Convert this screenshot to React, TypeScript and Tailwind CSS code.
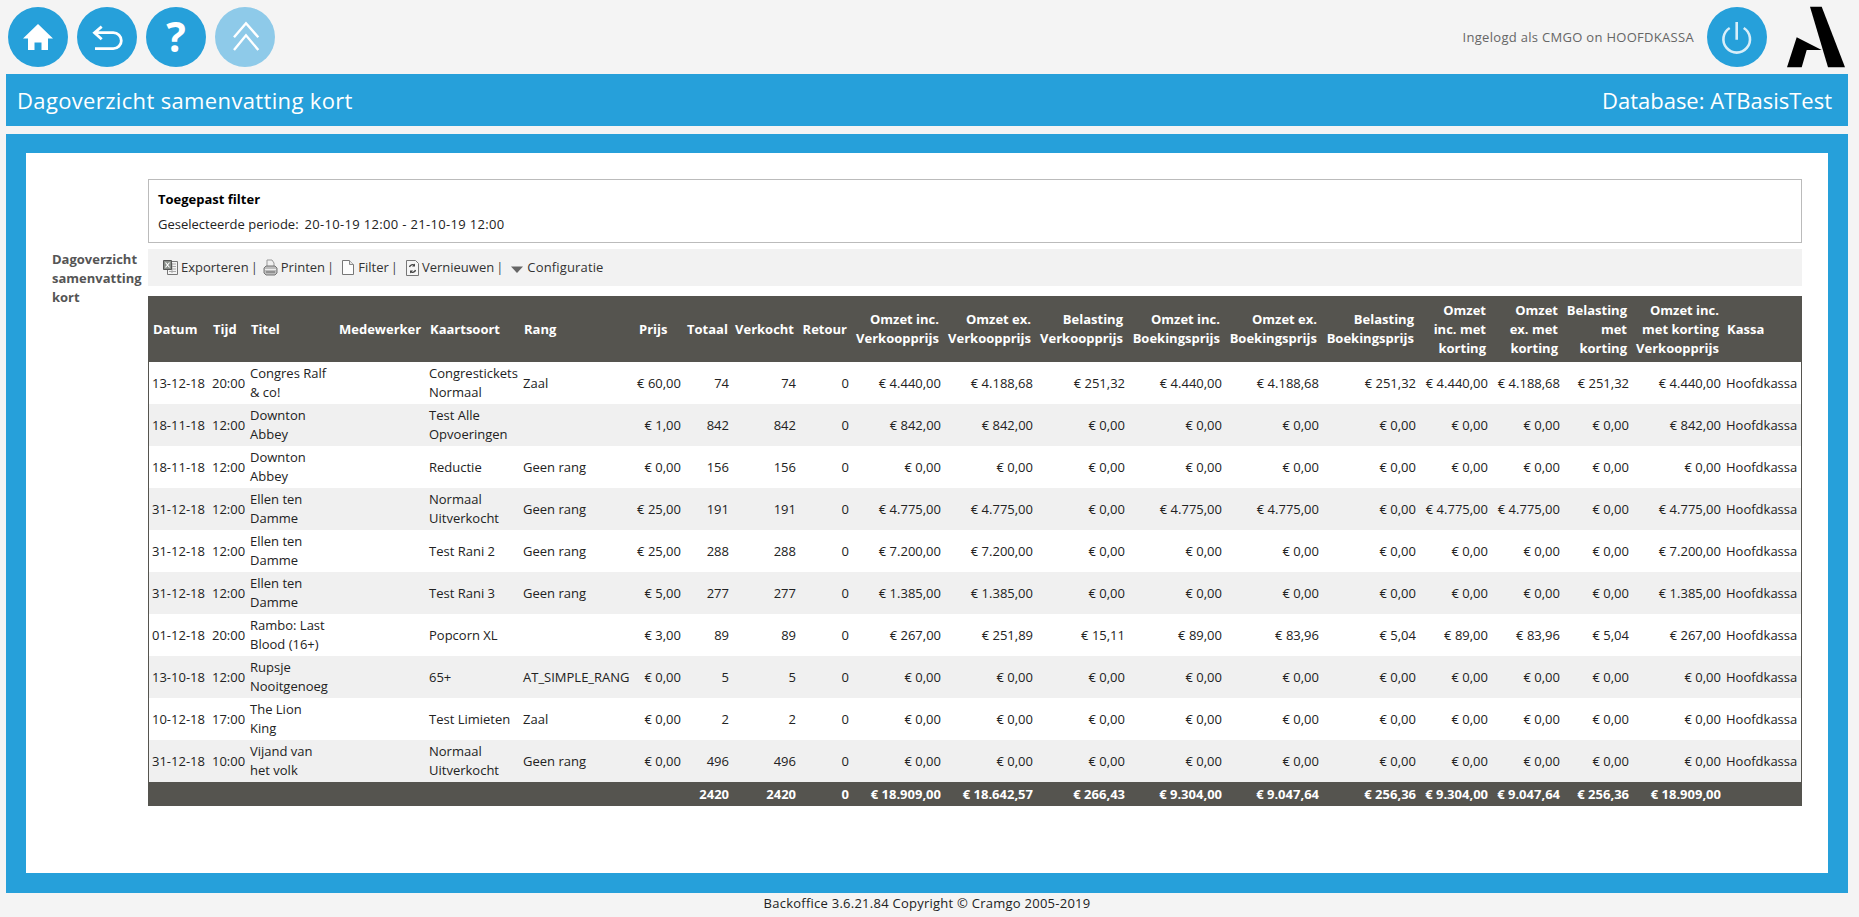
const colWidths = [
  "w-[60px]", "w-[38px]", "w-[88px]", "w-[91px]", "w-[94px]", "w-[115px]", "w-[48px]",
  "w-[48px]", "w-[67px]", "w-[53px]", "w-[92px]", "w-[92px]", "w-[92px]", "w-[97px]",
  "w-[97px]", "w-[97px]", "w-[72px]", "w-[72px]", "w-[69px]", "w-[92px]", "w-[78px]",
];

const headers = [
  "Datum", "Tijd", "Titel", "Medewerker", "Kaartsoort", "Rang", "Prijs",
  "Totaal", "Verkocht", "Retour",
  "Omzet inc.\nVerkoopprijs", "Omzet ex.\nVerkoopprijs", "Belasting\nVerkoopprijs",
  "Omzet inc.\nBoekingsprijs", "Omzet ex.\nBoekingsprijs", "Belasting\nBoekingsprijs",
  "Omzet\ninc. met\nkorting", "Omzet\nex. met\nkorting", "Belasting\nmet\nkorting",
  "Omzet inc.\nmet korting\nVerkoopprijs", "Kassa",
];

const zeros = ["€ 0,00", "€ 0,00", "€ 0,00", "€ 0,00", "€ 0,00", "€ 0,00", "€ 0,00", "€ 0,00", "€ 0,00", "€ 0,00"];

const rows: string[][] = [
  ["13-12-18", "20:00", "Congres Ralf\n& co!", "", "Congrestickets\nNormaal", "Zaal", "€ 60,00", "74", "74", "0",
    "€ 4.440,00", "€ 4.188,68", "€ 251,32", "€ 4.440,00", "€ 4.188,68", "€ 251,32", "€ 4.440,00", "€ 4.188,68", "€ 251,32", "€ 4.440,00", "Hoofdkassa"],
  ["18-11-18", "12:00", "Downton\nAbbey", "", "Test Alle\nOpvoeringen", "", "€ 1,00", "842", "842", "0",
    "€ 842,00", "€ 842,00", "€ 0,00", "€ 0,00", "€ 0,00", "€ 0,00", "€ 0,00", "€ 0,00", "€ 0,00", "€ 842,00", "Hoofdkassa"],
  ["18-11-18", "12:00", "Downton\nAbbey", "", "Reductie", "Geen rang", "€ 0,00", "156", "156", "0", ...zeros, "Hoofdkassa"],
  ["31-12-18", "12:00", "Ellen ten\nDamme", "", "Normaal\nUitverkocht", "Geen rang", "€ 25,00", "191", "191", "0",
    "€ 4.775,00", "€ 4.775,00", "€ 0,00", "€ 4.775,00", "€ 4.775,00", "€ 0,00", "€ 4.775,00", "€ 4.775,00", "€ 0,00", "€ 4.775,00", "Hoofdkassa"],
  ["31-12-18", "12:00", "Ellen ten\nDamme", "", "Test Rani 2", "Geen rang", "€ 25,00", "288", "288", "0",
    "€ 7.200,00", "€ 7.200,00", "€ 0,00", "€ 0,00", "€ 0,00", "€ 0,00", "€ 0,00", "€ 0,00", "€ 0,00", "€ 7.200,00", "Hoofdkassa"],
  ["31-12-18", "12:00", "Ellen ten\nDamme", "", "Test Rani 3", "Geen rang", "€ 5,00", "277", "277", "0",
    "€ 1.385,00", "€ 1.385,00", "€ 0,00", "€ 0,00", "€ 0,00", "€ 0,00", "€ 0,00", "€ 0,00", "€ 0,00", "€ 1.385,00", "Hoofdkassa"],
  ["01-12-18", "20:00", "Rambo: Last\nBlood (16+)", "", "Popcorn XL", "", "€ 3,00", "89", "89", "0",
    "€ 267,00", "€ 251,89", "€ 15,11", "€ 89,00", "€ 83,96", "€ 5,04", "€ 89,00", "€ 83,96", "€ 5,04", "€ 267,00", "Hoofdkassa"],
  ["13-10-18", "12:00", "Rupsje\nNooitgenoeg", "", "65+", "AT_SIMPLE_RANG", "€ 0,00", "5", "5", "0", ...zeros, "Hoofdkassa"],
  ["10-12-18", "17:00", "The Lion\nKing", "", "Test Limieten", "Zaal", "€ 0,00", "2", "2", "0", ...zeros, "Hoofdkassa"],
  ["31-12-18", "10:00", "Vijand van\nhet volk", "", "Normaal\nUitverkocht", "Geen rang", "€ 0,00", "496", "496", "0", ...zeros, "Hoofdkassa"],
];

const totals = ["", "", "", "", "", "", "", "2420", "2420", "0",
  "€ 18.909,00", "€ 18.642,57", "€ 266,43", "€ 9.304,00", "€ 9.047,64", "€ 256,36", "€ 9.304,00", "€ 9.047,64", "€ 256,36", "€ 18.909,00", ""];

// columns 0-6 and the last one are left aligned in the header, Prijs too
const isLeftHeader = (i: number) => i <= 6 || i === 20;
const isLeftCell = (i: number) => i <= 5 || i === 20;

function RoundButton({ children, light }: { children: React.ReactNode; light?: boolean }) {
  return (
    <div className={`w-[60px] h-[60px] rounded-full flex items-center justify-center shrink-0 ${light ? "bg-[#8ecae9]" : "bg-[#26a0da]"}`}>
      {children}
    </div>
  );
}

function ExportIcon() {
  return (
    <svg width="16" height="17" viewBox="0 0 16 17">
      <path d="M4.5 2.5h10v13h-10z" fill="#f4f4f4" stroke="#777" />
      <path d="M6 5h7M6 7.5h7M6 10h7M6 12.5h7M9 4v10" stroke="#aaa" />
      <path d="M.5 1.5h8v9h-8z" fill="#8a8f8a" stroke="#555" />
      <path d="M2.5 3.5l4 5M6.5 3.5l-4 5" stroke="#fff" strokeWidth="1.2" />
    </svg>
  );
}

function PrintIcon() {
  return (
    <svg width="15" height="17" viewBox="0 0 15 17">
      <path d="M4 1h5l2 3v4H4z" fill="#f0f0f0" stroke="#999" />
      <path d="M1 9l2-2h9l2 2v5l-2 2H3l-2-2z" fill="#bdbdbd" stroke="#777" />
      <path d="M2 10.500h11" stroke="#eee" />
      <path d="M3 13h9" stroke="#666" />
    </svg>
  );
}

function PageIcon() {
  return (
    <svg width="12" height="15" viewBox="0 0 12 15">
      <path d="M.5.500h7l4 4v10H.5z" fill="#fdfdfd" stroke="#777" />
      <path d="M7.500.500v4h4" fill="#e4e4e4" stroke="#888" />
    </svg>
  );
}

function RefreshIcon() {
  return (
    <svg width="13" height="17" viewBox="0 0 13 17">
      <path d="M.5 1.500h9l3 3v12H.5z" fill="#f6f6f6" stroke="#777" />
      <path d="M3.500 8a3 3 0 0 1 5-1.500M9.500 11a3 3 0 0 1-5 1.500" fill="none" stroke="#444" strokeWidth="1.3" />
      <path d="M9 4.500v3H6zM4 14.500v-3h3z" fill="#444" />
    </svg>
  );
}

function Sep({ className }: { className: string }) {
  return <span className={`ml-[2px] text-[#444] ${className}`}>|</span>;
}

export default function App() {
  return (
    <div className="w-[1859px] h-[917px] bg-[#f4f4f4] overflow-hidden font-['Open_Sans',sans-serif] text-[13px] leading-[19px] text-[#222]">
      {/* top bar */}
      <div className="h-[74px] flex items-center justify-between pl-[8px] pr-[14px]">
        <div className="flex gap-[9px] -mt-[1px]">
          <RoundButton>
            <svg width="60" height="60" viewBox="0 0 60 60">
              <path d="M30 17L15 31.500h5V43h6.500v-7.500h7V43H40V31.500h5z" fill="#fff" />
            </svg>
          </RoundButton>
          <RoundButton>
            <svg width="60" height="60" viewBox="0 0 60 60" fill="none" stroke="#fff" strokeWidth="2.8">
              <path d="M24.700 19.700L17.500 25.700l7.200 6.600M17.500 25.700h18.800a8 8 0 0 1 0 16H18" />
            </svg>
          </RoundButton>
          <RoundButton>
            <span className="font-bold text-[41px] leading-none text-white">?</span>
          </RoundButton>
          <RoundButton light>
            <svg width="60" height="60" viewBox="0 0 60 60" fill="none" stroke="#fff" strokeWidth="2.4">
              <path d="M19 30.300L31 16.300l12.300 14M19 43l12-14.700L43.300 43" />
            </svg>
          </RoundButton>
        </div>
        <div className="flex items-center">
          <span className="text-[#666] mr-[13px] tracking-[0.3px]">Ingelogd als CMGO on HOOFDKASSA</span>
          <RoundButton>
            <svg width="60" height="60" viewBox="0 0 60 60" fill="none" stroke="#d8eef9" strokeWidth="2.600">
              <path d="M22.700 21A13.300 13.300 0 1 0 36.700 21M29.700 15v17.700" />
            </svg>
          </RoundButton>
          <svg width="58" height="62" viewBox="0 0 58 62" className="ml-[20px]" fill="#000">
            <path d="M23 .7h11.700L58 61.300H41z" />
            <path d="M9.700 31.300L34.700 44h-15l-5 17.300H0z" />
          </svg>
        </div>
      </div>

      <div className="ml-[6px] mr-[11px]">
        {/* title bar */}
        <div className="h-[52px] bg-[#26a0da] text-white flex items-center justify-between pl-[11px] pr-[16px] text-[22px]">
          <span className="tracking-[0.35px]">Dagoverzicht samenvatting kort</span>
          <span>Database: ATBasisTest</span>
        </div>

        {/* main panel */}
        <div className="mt-[8px] h-[759px] bg-[#26a0da] pt-[19px] px-[20px] pb-[20px]">
          <div className="h-full bg-white pt-[26px] flex">
            <div className="w-[122px] pt-[71px] pl-[26px] font-bold text-[#555] shrink-0">
              Dagoverzicht samenvatting kort
            </div>
            <div className="w-[1654px]">
              <div className="h-[64px] border border-[#bbb] pl-[9px] pt-[10px]">
                <div className="font-bold text-black">Toegepast filter</div>
                <div className="mt-[6px] flex">
                  <span>Geselecteerde periode:</span>
                  <span className="ml-[6px] tracking-[0.32px]">20-10-19 12:00 - 21-10-19 12:00</span>
                </div>
              </div>

              <div className="mt-[6px] h-[37px] bg-[#f2f2f2] flex items-center pl-[15px] text-[#333]">
                <ExportIcon />
                <span className="ml-[2px]">Exporteren</span>
                <Sep className="mr-[5px]" />
                <PrintIcon />
                <span className="ml-[3px]">Printen</span>
                <Sep className="mr-[8px]" />
                <PageIcon />
                <span className="ml-[4px]">Filter</span>
                <Sep className="mr-[8px]" />
                <RefreshIcon />
                <span className="ml-[3px]">Vernieuwen</span>
                <Sep className="mr-[7px]" />
                <svg width="12" height="7" viewBox="0 0 12 7" className="ml-[1px] mt-[3px]">
                  <path d="M0 .5h12L6 7z" fill="#666" />
                </svg>
                <span className="ml-[4px] tracking-[0.15px]">Configuratie</span>
              </div>

              <div className="mt-[10px] border-x border-[#55544f]">
                <table className="table-fixed w-[1652px] border-collapse">
                  <colgroup>
                    {colWidths.map((c, i) => (
                      <col key={i} className={c} />
                    ))}
                  </colgroup>
                  <thead>
                    <tr className="h-[66px] bg-[#55544f] text-white">
                      {headers.map((h, i) => (
                        <th
                          key={i}
                          className={`px-[4px] font-bold whitespace-pre-line ${isLeftHeader(i) ? "text-left" : "text-right"}`}
                        >
                          {h}
                        </th>
                      ))}
                    </tr>
                  </thead>
                  <tbody>
                    {rows.map((row, r) => (
                      <tr key={r} className={`h-[42px] ${r % 2 === 1 ? "bg-[#f0f0f0]" : "bg-white"}`}>
                        {row.map((cell, i) => (
                          <td
                            key={i}
                            className={`whitespace-pre-line ${isLeftCell(i) ? "pl-[3px] pr-[1px] text-left" : "px-[2px] text-right"}`}
                          >
                            {cell}
                          </td>
                        ))}
                      </tr>
                    ))}
                    <tr className="h-[24px] bg-[#55544f] text-white font-bold">
                      {totals.map((t, i) => (
                        <td key={i} className="px-[2px] text-right">
                          {t}
                        </td>
                      ))}
                    </tr>
                  </tbody>
                </table>
              </div>
            </div>
          </div>
        </div>
      </div>

      <div className="text-center text-[#222] pt-[1px] pr-[5px] tracking-[0.25px]">Backoffice 3.6.21.84 Copyright © Cramgo 2005-2019</div>
    </div>
  );
}
